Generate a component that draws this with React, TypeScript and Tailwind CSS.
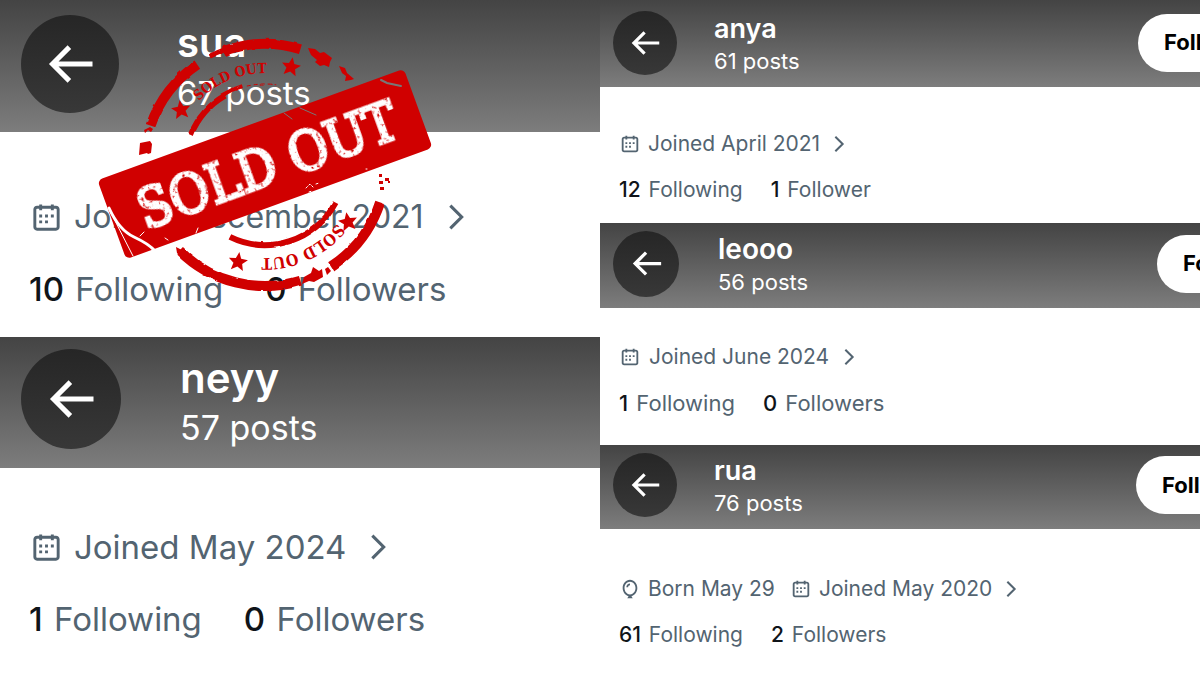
import clsx from 'clsx';

type Size = 'sm' | 'md' | 'lg' | 'xl';

type Profile = {
  name: string;
  posts: number;
  born?: string;
  joined: string;
  following: number;
  followers: number;
  size: Size;
  soldOut?: boolean;
  canFollow?: boolean;
  headerClass: string;
  bodyClass: string;
  buttonClass?: string;
};

const leftProfiles: Profile[] = [
  {
    name: 'sua',
    posts: 67,
    joined: 'December 2021',
    following: 10,
    followers: 0,
    size: 'lg',
    soldOut: true,
    headerClass: 'h-[132px] pb-1',
    bodyClass: 'h-[205px] pt-[61px]',
  },
  {
    name: 'neyy',
    posts: 57,
    joined: 'May 2024',
    following: 1,
    followers: 0,
    size: 'xl',
    headerClass: 'h-[131px] pb-2',
    bodyClass: 'pt-[55px]',
  },
];

const rightProfiles: Profile[] = [
  {
    name: 'anya',
    posts: 61,
    joined: 'April 2021',
    following: 12,
    followers: 1,
    size: 'sm',
    canFollow: true,
    headerClass: 'h-[87px] pb-0.5',
    bodyClass: 'h-[136px] pt-[41px]',
    buttonClass: '-mr-[66px]',
  },
  {
    name: 'leooo',
    posts: 56,
    joined: 'June 2024',
    following: 1,
    followers: 0,
    size: 'md',
    canFollow: true,
    headerClass: 'h-[85px] pb-1',
    bodyClass: 'h-[137px] pt-[33px]',
    buttonClass: '-mr-[85px]',
  },
  {
    name: 'rua',
    posts: 76,
    born: 'May 29',
    joined: 'May 2020',
    following: 61,
    followers: 2,
    size: 'sm',
    canFollow: true,
    headerClass: 'h-[84px] pb-1',
    bodyClass: 'pt-11',
    buttonClass: '-mr-[64px]',
  },
];

const sizes = {
  sm: {
    back: 'size-16',
    arrow: 'size-[38px]',
    heading: 'ml-[37px] pt-1',
    name: 'text-[27px] leading-8',
    posts: 'text-[22px] leading-8',
    joined: 'text-[21px] gap-[7px]',
    counts: 'text-[21px] gap-7',
  },
  md: {
    back: 'size-[66px]',
    arrow: 'size-[39px]',
    heading: 'ml-[39px] pt-1',
    name: 'text-[28px] leading-8',
    posts: 'text-[22px] leading-[34px]',
    joined: 'text-[21px] gap-2',
    counts: 'text-[22px] gap-7',
  },
  lg: {
    back: 'size-[98px]',
    arrow: 'size-[60px]',
    heading: 'ml-[58px] pt-2',
    name: 'text-[40px] leading-[50px]',
    posts: 'text-[33px] leading-[50px]',
    joined: 'text-[32px] gap-2.5',
    counts: 'text-[33px] gap-[42px]',
  },
  xl: {
    back: 'size-[100px]',
    arrow: 'size-[60px]',
    heading: 'ml-[59px] pt-2',
    name: 'text-[42px] leading-[50px]',
    posts: 'text-[34px] leading-[50px]',
    joined: 'text-[33px] gap-2.5',
    counts: 'text-[33px] gap-[42px]',
  },
};

const isLarge = (size: Size) => size === 'lg' || size === 'xl';

const icons = {
  back: 'M7.414 13l5.043 5.04-1.414 1.42L3.586 12l7.457-7.46 1.414 1.42L7.414 11H21v2H7.414z',
  calendar:
    'M7 4V3h2v1h6V3h2v1h1.5C19.89 4 21 5.12 21 6.5v12c0 1.38-1.11 2.5-2.5 2.5h-13C4.12 21 3 19.88 3 18.5v-12C3 5.12 4.12 4 5.5 4H7zm0 2H5.5c-.27 0-.5.22-.5.5v12c0 .28.23.5.5.5h13c.28 0 .5-.22.5-.5v-12c0-.28-.22-.5-.5-.5H17v1h-2V6H9v1H7V6zm0 6h2v-2H7v2zm0 4h2v-2H7v2zm4-4h2v-2h-2v2zm0 4h2v-2h-2v2zm4-4h2v-2h-2v2z',
  balloon:
    'M8 10c0-2.21 1.79-4 4-4v2c-1.1 0-2 .9-2 2H8zm12 1c0 4.27-2.69 8.01-6.44 8.83L15 22H9l1.45-2.17C6.7 19.01 4 15.27 4 11c0-4.84 3.46-9 8-9s8 4.16 8 9zm-8 7c3.19 0 6-3 6-7s-2.81-7-6-7-6 3-6 7 2.81 7 6 7z',
};

const Icon = ({ path, className }: { path: string; className?: string }) => (
  <svg viewBox="0 0 24 24" fill="currentColor" aria-hidden="true" className={clsx('shrink-0', className)}>
    <path d={path} />
  </svg>
);

// Stamp geometry: everything sits on circles round this centre
const CX = 265;
const CY = 165;

const point = (r: number, deg: number) => {
  const a = (deg * Math.PI) / 180;
  return `${(CX + r * Math.cos(a)).toFixed(1)} ${(CY + r * Math.sin(a)).toFixed(1)}`;
};

const arc = (r: number, from: number, to: number) =>
  `M${point(r, from)}A${r} ${r} 0 0 1 ${point(r, to)}`;

const outerArcs = [[199, 236], [250, 287], [18, 57], [73, 135]];
const innerArcs = [[202, 240], [28, 116]];
const stars = [[291, 67, 10], [181, 110, -8], [238, 262, 8], [348, 222, -10]];

const STAR = 'M0-10l2.7 6.4 6.9.6-5.2 4.4 1.7 6.8L0 4.6l-6.1 3.6 1.7-6.8-5.2-4.4 6.9-.6z';

const Stamp = () => (
  <svg
    viewBox="90 30 350 270"
    role="img"
    aria-label="Sold out"
    className="pointer-events-none absolute left-[90px] top-[30px] h-[270px] w-[350px]"
  >
    <defs>
      <filter id="rough" x="-5%" y="-5%" width="110%" height="110%">
        <feTurbulence type="fractalNoise" baseFrequency="0.12" numOctaves="1" seed="4" />
        <feDisplacementMap in="SourceGraphic" scale="3" xChannelSelector="R" yChannelSelector="G" />
      </filter>
      <filter id="worn" x="-5%" y="-5%" width="110%" height="110%">
        <feTurbulence type="fractalNoise" baseFrequency="0.3" numOctaves="2" seed="9" />
        <feColorMatrix values="0 0 0 0 0  0 0 0 0 0  0 0 0 0 0  0 0 0 5 -3" />
        <feComposite in="SourceGraphic" operator="out" />
      </filter>
      <path id="top-text" d={arc(92, 224, 300)} />
      <path id="bottom-text" d={arc(93, 39, 125)} />
    </defs>
    <g fill="none" stroke="#d00000" filter="url(#rough)">
      {outerArcs.map(([from, to]) => (
        <path key={from} d={arc(121, from, to)} strokeWidth="10" />
      ))}
      {innerArcs.map(([from, to]) => (
        <path key={from} d={arc(80, from, to)} strokeWidth="6" />
      ))}
      <path d={arc(82, 238, 254)} strokeWidth="4" />
      <path d={arc(81, 257, 278)} strokeWidth="1" strokeDasharray="4 3" />
      <path d={arc(122, 243, 251)} strokeWidth="5" />
    </g>
    {/* broken bits of the outer ring */}
    <g fill="#d00000">
      <path d="M140 143l10-2 2 3-1 9-3 1-1-1-8 2z" />
      <path d="M308 48l7 1 5 4 4-1 8 6-2 4-1 5-5-2-4 1-5-4 2-2-6-5z" />
      <path d="M339 66l6 2 2 5 7 6-3 1-6 1 1-5-4-3z" />
      <path d="M304 277l7-4 2-6 6 4 3-2 1 8-9 5-5-1-7 3z" />
      <path d="M325 269l3-2 3 4-4 4z" />
      <path d="M144 130l6-3 3 2-2 3-3-2-3 3zM176 247l6 3-2 6-3-3z" />
    </g>
    <g fill="#d00000">
      {stars.map(([x, y, turn]) => (
        <path key={x} d={STAR} transform={`translate(${x} ${y}) rotate(${turn})`} />
      ))}
      <path d="M379 181h4v3h-4zM385 178h4v3h-4zM379 174h3v3h-3zM388 181h2v2h-2zM380 187h4v3h-4z" />
      <g fontWeight="700" fontFamily="'DejaVu Serif Condensed', 'DejaVu Serif', serif">
        <text fontSize="14"><textPath href="#top-text">SOLD OUT</textPath></text>
        <text fontSize="16"><textPath href="#bottom-text">SOLD OUT</textPath></text>
      </g>
    </g>
    <g transform="rotate(-20 265 164)">
      <rect x="102" y="122" width="326" height="84" rx="5" fill="#d00000" />
      <text
        x="267"
        y="185"
        textAnchor="middle"
        fontSize="54"
        fontFamily="'DejaVu Serif Condensed', 'DejaVu Serif', serif"
        fill="#fff"
        stroke="#fff"
        strokeWidth="3"
        filter="url(#worn)"
      >
        SOLD OUT
      </text>
    </g>
    {/* scratches in the ink */}
    <g fill="none" stroke="#fff" strokeLinecap="round">
      <path d="M109 208q10 22 25 29t21 14" strokeWidth="3" />
      <path d="M110 211l23 45M140 236l4-4M165 238l3 2M196 233l2-5" strokeWidth="1" />
      <path d="M306 188l4-4 3 3M316 184l3-1M309 192l3-1M366 169h1" strokeWidth="1" strokeDasharray="2 2" />
    </g>
    <g fill="none" stroke="#777" strokeLinecap="round">
      <path d="M381 80l6 3 14 3" strokeWidth="2" />
      <path d="M284 113l8 6M300 108l16 7" strokeWidth="1" />
    </g>
  </svg>
);

const Header = ({ profile }: { profile: Profile }) => {
  const { name, posts, canFollow, headerClass, buttonClass } = profile;
  const size = sizes[profile.size];
  return (
    <header
      className={clsx(
        'flex items-center overflow-hidden bg-linear-to-b from-[#444] to-[#7d7d7d] text-white',
        isLarge(profile.size) ? 'pl-[21px]' : 'pl-[13px]',
        headerClass,
      )}
    >
      <button
        aria-label="Back"
        className={clsx(
          'flex shrink-0 items-center justify-center rounded-full bg-linear-to-b from-[#262626] to-[#383838]',
          size.back,
        )}
      >
        <Icon path={icons.back} className={size.arrow} />
      </button>
      <div className={clsx('grow', size.heading)}>
        <h2 className={clsx('font-semibold', size.name)}>{name}</h2>
        <p className={size.posts}>{posts} posts</p>
      </div>
      {canFollow && (
        <button
          className={clsx(
            'h-[58px] w-32 shrink-0 rounded-full bg-white pl-[26px] text-left text-[22px] font-bold text-black',
            buttonClass,
          )}
        >
          Follow
        </button>
      )}
    </header>
  );
};

const Count = ({ value, label }: { value: number; label: string }) => (
  <a href="#">
    <span className="mr-0.5 font-medium text-[#0f1419]">{value}</span> {label}
  </a>
);

const ProfileCard = ({ profile }: { profile: Profile }) => {
  const { born, joined, following, followers, soldOut, bodyClass } = profile;
  const size = sizes[profile.size];
  const large = isLarge(profile.size);
  const iconSize = large ? 'size-[35px]' : 'size-[22px]';
  return (
    <article className="relative">
      <Header profile={profile} />
      <div
        className={clsx(
          'flex flex-col whitespace-nowrap text-[#536471]',
          large ? 'gap-6 pl-[29px] leading-[48px]' : 'gap-3.5 pl-[19px] leading-8',
          bodyClass,
        )}
      >
        <div className={clsx('flex items-center', size.joined)}>
          {born && (
            <>
              <Icon path={icons.balloon} className={iconSize} />
              <span className="mr-2">Born {born}</span>
            </>
          )}
          <Icon path={icons.calendar} className={iconSize} />
          <span>Joined {joined}</span>
          <svg
            viewBox="0 0 16 24"
            fill="none"
            stroke="currentColor"
            strokeWidth="2.2"
            aria-hidden="true"
            className={large ? 'ml-2.5 h-[34px] w-6' : 'ml-1 h-[22px] w-4'}
          >
            <path d="M4 4l8 8-8 8" />
          </svg>
        </div>
        <div className={clsx('flex', size.counts)}>
          <Count value={following} label="Following" />
          <Count value={followers} label={followers === 1 ? 'Follower' : 'Followers'} />
        </div>
      </div>
      {soldOut && <Stamp />}
    </article>
  );
};

export default function App() {
  return (
    <main className="grid min-h-screen grid-cols-2 overflow-hidden bg-white font-['Inter','Liberation_Sans',sans-serif]">
      <section>
        {leftProfiles.map((profile) => (
          <ProfileCard key={profile.name} profile={profile} />
        ))}
      </section>
      <section>
        {rightProfiles.map((profile) => (
          <ProfileCard key={profile.name} profile={profile} />
        ))}
      </section>
    </main>
  );
}
